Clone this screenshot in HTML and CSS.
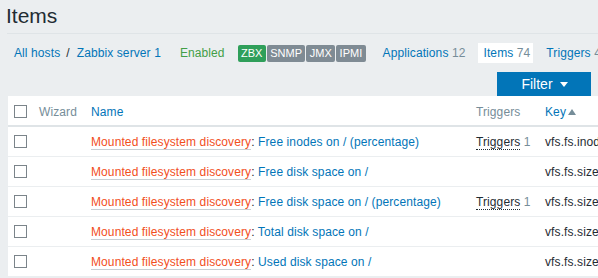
FILE: index.html
```html
<!DOCTYPE html>
<html lang="en">
<head>
  <meta charset="UTF-8">
  <title>Items</title>
  <link rel="stylesheet" href="styles.css">
</head>
<body>
  <div class="page">
    <!-- Title -->
    <header class="header-title">
      <h1>Items</h1>
    </header>

    <!-- Host navigation -->
    <nav class="host-nav">
      <a class="link" href="#">All hosts</a>
      <span class="crumb-sep">/</span>
      <a class="link" href="#">Zabbix server 1</a>
      <span class="status-enabled">Enabled</span>
      <span class="badges">
        <span class="badge badge-green">ZBX</span>
        <span class="badge">SNMP</span>
        <span class="badge">JMX</span>
        <span class="badge">IPMI</span>
      </span>
      <a class="tab" href="#">Applications <span class="count">12</span></a>
      <a class="tab tab-active" href="#">Items <span class="count">74</span></a>
      <a class="tab" href="#">Triggers <span class="count">44</span></a>
    </nav>

    <!-- Filter toggle -->
    <div class="filter-row">
      <button class="filter-trigger">Filter <span class="caret-down"></span></button>
    </div>

    <!-- Items list -->
    <table class="list-table">
      <colgroup>
        <col class="col-check">
        <col class="col-wizard">
        <col class="col-name">
        <col class="col-triggers">
        <col class="col-key">
      </colgroup>
      <thead>
        <tr>
          <th><span class="checkbox"></span></th>
          <th class="muted">Wizard</th>
          <th><a class="link" href="#">Name</a></th>
          <th class="muted">Triggers</th>
          <th><a class="link" href="#">Key</a> <span class="caret-up"></span></th>
        </tr>
      </thead>
      <tbody>
        <tr>
          <td><span class="checkbox"></span></td>
          <td></td>
          <td><a class="link-alt" href="#">Mounted filesystem discovery</a>: <a class="link" href="#">Free inodes on / (percentage)</a></td>
          <td><span class="hint">Triggers</span> <span class="count">1</span></td>
          <td>vfs.fs.inode[/,pfree]</td>
        </tr>
        <tr>
          <td><span class="checkbox"></span></td>
          <td></td>
          <td><a class="link-alt" href="#">Mounted filesystem discovery</a>: <a class="link" href="#">Free disk space on /</a></td>
          <td></td>
          <td>vfs.fs.size<span class="macro">[/,free]</span></td>
        </tr>
        <tr>
          <td><span class="checkbox"></span></td>
          <td></td>
          <td><a class="link-alt" href="#">Mounted filesystem discovery</a>: <a class="link" href="#">Free disk space on / (percentage)</a></td>
          <td><span class="hint">Triggers</span> <span class="count">1</span></td>
          <td>vfs.fs.size<span class="macro">[/,pfree]</span></td>
        </tr>
        <tr>
          <td><span class="checkbox"></span></td>
          <td></td>
          <td><a class="link-alt" href="#">Mounted filesystem discovery</a>: <a class="link" href="#">Total disk space on /</a></td>
          <td></td>
          <td>vfs.fs.size<span class="macro">[/,total]</span></td>
        </tr>
        <tr>
          <td><span class="checkbox"></span></td>
          <td></td>
          <td><a class="link-alt" href="#">Mounted filesystem discovery</a>: <a class="link" href="#">Used disk space on /</a></td>
          <td></td>
          <td>vfs.fs.size<span class="macro">[/,used]</span></td>
        </tr>
      </tbody>
    </table>
  </div>
</body>
</html>
```

FILE: styles.css
```css
/* Blue theme colours */
:root {
  --bg: #ebeef0;
  --text: #1f2c33;
  --link: #0275b8;
  --muted: #768d99;
  --orange: #f24f1d;
  --green: #429e47;
  --badge-green: #2f9f5a;
  --badge-grey: #7f8b94;
  --line: #dfe4e7;
}

body {
  margin: 0;
  background-color: var(--bg);
  color: var(--text);
  font-family: "Liberation Sans", Arial, sans-serif;
  font-size: 12px;
  line-height: 14px;
  letter-spacing: 0.1px;
}

.page {
  width: 598px;
  overflow: hidden;
}

a {
  text-decoration: none;
}

.link {
  color: var(--link);
}

.count {
  color: var(--muted);
}

/* Header */
.header-title {
  margin-left: 7px;
  padding: 4px 0 5px;
  border-bottom: 1px solid var(--line);
}

.header-title h1 {
  margin: 0 0 0 -1px;
  font-size: 21px;
  font-weight: normal;
  line-height: 24px;
  letter-spacing: 0;
}

/* Host navigation */
.host-nav {
  display: flex;
  align-items: center;
  height: 20px;
  margin-top: 9px;
  padding-left: 14px;
  line-height: 20px;
  white-space: nowrap;
}

.crumb-sep {
  padding: 0 7px 0 6px;
}

.status-enabled {
  margin-left: 19px;
  color: var(--green);
}

.badges {
  display: flex;
  gap: 1px;
  margin-left: 13px;
  margin-right: 5px;
}

.badge {
  height: 17px;
  padding: 0 3.4px;
  border-radius: 2px;
  background-color: var(--badge-grey);
  color: #fff;
  font-size: 11px;
  line-height: 17px;
  letter-spacing: 0;
}

.badge-green {
  background-color: var(--badge-green);
}

.tab {
  margin-left: 6px;
  padding: 0 6px;
  color: var(--link);
}

.tab-active {
  padding-right: 3px;
  background-color: #fff;
}

.tab:last-child {
  margin-left: 7px;
}

/* Filter */
.filter-row {
  display: flex;
  justify-content: flex-end;
  margin-top: 9px;
  padding-right: 7px;
}

.filter-trigger {
  display: flex;
  align-items: center;
  justify-content: center;
  gap: 7px;
  width: 94px;
  height: 24px;
  padding: 0 0 0 1px;
  border: none;
  background-color: var(--link);
  color: #fff;
  font-family: inherit;
  font-size: 14px;
}

.caret-down {
  width: 0;
  height: 0;
  border-left: 4px solid transparent;
  border-right: 4px solid transparent;
  border-top: 5px solid #fff;
}

/* Table */
.list-table {
  width: 760px;
  margin-left: 8px;
  border-collapse: collapse;
  table-layout: fixed;
  background-color: #fff;
  white-space: nowrap;
}

.col-check { width: 26px; }
.col-wizard { width: 52px; }
.col-name { width: 385px; }
.col-triggers { width: 69px; }
.col-key { width: 228px; }

.list-table th {
  height: 14px;
  padding: 9px 5px 6px;
  border-bottom: 2px solid var(--line);
  font-weight: normal;
  text-align: left;
  vertical-align: bottom;
}

.list-table td {
  height: 14px;
  padding: 8px 5px 7px;
  border-bottom: 1px solid var(--bg);
  overflow: hidden;
}

.list-table th:first-child,
.list-table td:first-child {
  padding-left: 6px;
  padding-right: 0;
}

.list-table th.muted {
  color: var(--muted);
}

.checkbox {
  display: inline-block;
  width: 11px;
  height: 11px;
  border: 1px solid #7b848a;
  background-color: #fff;
  vertical-align: -2px;
}

.caret-up {
  display: inline-block;
  width: 0;
  height: 0;
  margin-left: -1px;
  border-left: 4px solid transparent;
  border-right: 4px solid transparent;
  border-bottom: 6px solid var(--muted);
  vertical-align: 1px;
}

.link-alt {
  color: var(--orange);
  border-bottom: 1px solid #c8ced2;
}

.hint {
  border-bottom: 1px dotted var(--text);
}

.macro {
  color: #e0a33a;
}
```
